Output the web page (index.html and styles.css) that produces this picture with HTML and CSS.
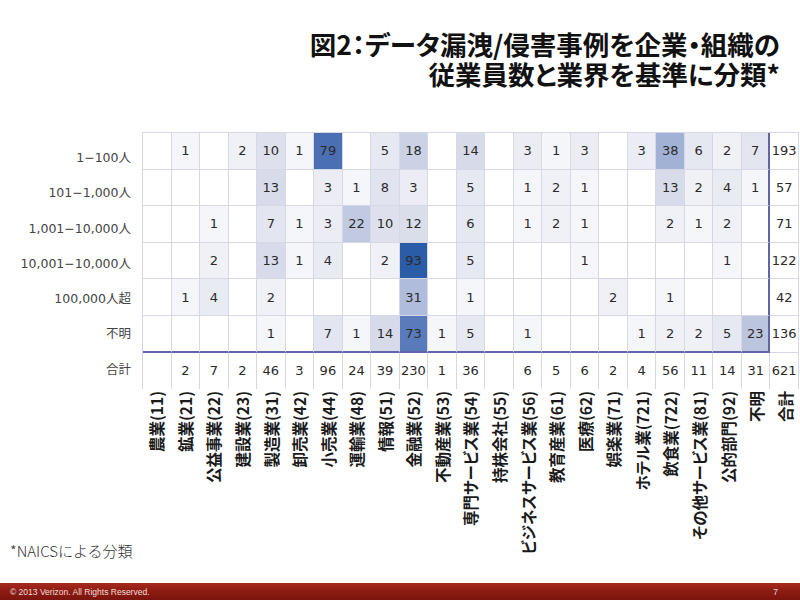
FILE: index.html
```html
<!DOCTYPE html>
<html lang="ja">
<head>
<meta charset="utf-8">
<title>図2</title>
<link rel="stylesheet" href="styles.css">
</head>
<body>
<div class="slide">
  <header class="title">
    <div>図2：データ漏洩/侵害事例を企業・組織の</div>
    <div>従業員数と業界を基準に分類*</div>
  </header>
  <section class="chart">
    <div class="rowlabels">
      <div>1−100人</div>
      <div>101−1,000人</div>
      <div>1,001−10,000人</div>
      <div>10,001−10,000人</div>
      <div>100,000人超</div>
      <div>不明</div>
      <div>合計</div>
    </div>
    <div class="plot">
      <div class="grid">
        <!-- row 1 -->
        <div class="c"></div><div class="c s1">1</div><div class="c"></div><div class="c s2">2</div><div class="c s10">10</div><div class="c s1">1</div><div class="c s79">79</div><div class="c"></div><div class="c s5">5</div><div class="c s18">18</div><div class="c"></div><div class="c s14">14</div><div class="c"></div><div class="c s3">3</div><div class="c s1">1</div><div class="c s3">3</div><div class="c"></div><div class="c s3">3</div><div class="c s38">38</div><div class="c s6">6</div><div class="c s2">2</div><div class="c s7 br">7</div><div class="c">193</div>
        <!-- row 2 -->
        <div class="c"></div><div class="c"></div><div class="c"></div><div class="c"></div><div class="c s13">13</div><div class="c"></div><div class="c s3">3</div><div class="c s1">1</div><div class="c s8">8</div><div class="c s3">3</div><div class="c"></div><div class="c s5">5</div><div class="c"></div><div class="c s1">1</div><div class="c s2">2</div><div class="c s1">1</div><div class="c"></div><div class="c"></div><div class="c s13">13</div><div class="c s2">2</div><div class="c s4">4</div><div class="c s1 br">1</div><div class="c">57</div>
        <!-- row 3 -->
        <div class="c"></div><div class="c"></div><div class="c s1">1</div><div class="c"></div><div class="c s7">7</div><div class="c s1">1</div><div class="c s3">3</div><div class="c s22">22</div><div class="c s10">10</div><div class="c s12">12</div><div class="c"></div><div class="c s6">6</div><div class="c"></div><div class="c s1">1</div><div class="c s2">2</div><div class="c s1">1</div><div class="c"></div><div class="c"></div><div class="c s2">2</div><div class="c s1">1</div><div class="c s2">2</div><div class="c br"></div><div class="c">71</div>
        <!-- row 4 -->
        <div class="c"></div><div class="c"></div><div class="c s2">2</div><div class="c"></div><div class="c s13">13</div><div class="c s1">1</div><div class="c s4">4</div><div class="c"></div><div class="c s2">2</div><div class="c s93">93</div><div class="c"></div><div class="c s5">5</div><div class="c"></div><div class="c"></div><div class="c"></div><div class="c s1">1</div><div class="c"></div><div class="c"></div><div class="c"></div><div class="c"></div><div class="c s1">1</div><div class="c br"></div><div class="c">122</div>
        <!-- row 5 -->
        <div class="c"></div><div class="c s1">1</div><div class="c s4">4</div><div class="c"></div><div class="c s2">2</div><div class="c"></div><div class="c"></div><div class="c"></div><div class="c"></div><div class="c s31">31</div><div class="c"></div><div class="c s1">1</div><div class="c"></div><div class="c"></div><div class="c"></div><div class="c"></div><div class="c s2">2</div><div class="c"></div><div class="c s1">1</div><div class="c"></div><div class="c"></div><div class="c br"></div><div class="c">42</div>
        <!-- row 6 -->
        <div class="c bb"></div><div class="c bb"></div><div class="c bb"></div><div class="c bb"></div><div class="c bb s1">1</div><div class="c bb"></div><div class="c bb s7">7</div><div class="c bb s1">1</div><div class="c bb s14">14</div><div class="c bb s73">73</div><div class="c bb s1">1</div><div class="c bb s5">5</div><div class="c bb"></div><div class="c bb s1">1</div><div class="c bb"></div><div class="c bb"></div><div class="c bb"></div><div class="c bb s1">1</div><div class="c bb s2">2</div><div class="c bb s2">2</div><div class="c bb s5">5</div><div class="c bb br s23">23</div><div class="c">136</div>
        <!-- totals -->
        <div class="c t"></div><div class="c t">2</div><div class="c t">7</div><div class="c t">2</div><div class="c t">46</div><div class="c t">3</div><div class="c t">96</div><div class="c t">24</div><div class="c t">39</div><div class="c t">230</div><div class="c t">1</div><div class="c t">36</div><div class="c t"></div><div class="c t">6</div><div class="c t">5</div><div class="c t">6</div><div class="c t">2</div><div class="c t">4</div><div class="c t">56</div><div class="c t">11</div><div class="c t">14</div><div class="c t">31</div><div class="c t">621</div>
      </div>
      <div class="collabels">
        <div><span>農業(11)</span></div>
        <div><span>鉱業(21)</span></div>
        <div><span>公益事業(22)</span></div>
        <div><span>建設業(23)</span></div>
        <div><span>製造業(31)</span></div>
        <div><span>卸売業(42)</span></div>
        <div><span>小売業(44)</span></div>
        <div><span>運輸業(48)</span></div>
        <div><span>情報(51)</span></div>
        <div><span>金融業(52)</span></div>
        <div><span>不動産業(53)</span></div>
        <div><span>専門サービス業(54)</span></div>
        <div><span>持株会社(55)</span></div>
        <div><span>ビジネスサービス業(56)</span></div>
        <div><span>教育産業(61)</span></div>
        <div><span>医療(62)</span></div>
        <div><span>娯楽業(71)</span></div>
        <div><span>ホテル業(721)</span></div>
        <div><span>飲食業(722)</span></div>
        <div><span>その他サービス業(81)</span></div>
        <div><span>公的部門(92)</span></div>
        <div><span>不明</span></div>
        <div><span>合計</span></div>
      </div>
    </div>
  </section>
  <p class="note">*NAICSによる分類</p>
  <footer class="footer">
    <span>© 2013 Verizon. All Rights Reserved.</span>
    <span>7</span>
  </footer>
</div>
</body>
</html>
```
FILE: styles.css
```css
html, body {
  margin: 0;
  padding: 0;
  background: #ffffff;
}

.slide {
  width: 800px;
  height: 600px;
  overflow: hidden;
  display: flex;
  flex-direction: column;
  font-family: "Noto Sans CJK JP", sans-serif;
  color: #222;
}

.title {
  height: 132px;
  box-sizing: border-box;
  padding: 29px 20px 0 0;
  text-align: right;
  font-size: 26.5px;
  line-height: 30px;
  font-weight: 700;
  color: #111;
  font-feature-settings: "palt";
}

.chart {
  display: flex;
}

.rowlabels {
  width: 142px;
  box-sizing: border-box;
  padding: 8px 11px 0 0;
  font-family: "DejaVu Sans", "Noto Sans CJK JP", sans-serif;
  font-size: 12.5px;
  color: #444;
  text-align: right;
}

.rowlabels div {
  height: 35.3px;
  line-height: 35.3px;
}

.plot {
  width: 657px;
}

.grid {
  display: grid;
  grid-template-columns: repeat(23, 1fr);
  grid-auto-rows: 36.6px;
  border-top: 1px solid #d6d8e6;
  border-left: 1px solid #d6d8e6;
  font-family: "DejaVu Sans", sans-serif;
  font-size: 13px;
  color: #2a2a2a;
}

.c {
  display: flex;
  align-items: center;
  justify-content: center;
  border-right: 1px solid #d6d8e6;
  border-bottom: 1px solid #d6d8e6;
  min-width: 0;
}

.c.t {
  border-bottom: none;
}

.c.bb {
  border-bottom: 2px solid #6265aa;
}

.c.br {
  border-right: 2px solid #6265aa;
}

.s1 { background: #f5f6fa; }
.s2 { background: #f0f1f6; }
.s3 { background: #ecedf4; }
.s4 { background: #e9ebf3; }
.s5 { background: #e7e9f2; }
.s6 { background: #e5e7f1; }
.s7 { background: #e3e5f0; }
.s8 { background: #e1e4ef; }
.s10 { background: #dee1ed; }
.s12 { background: #dadeeb; }
.s13 { background: #d8dcea; }
.s14 { background: #d6dae9; }
.s18 { background: #ccd2e5; }
.s22 { background: #c2cae1; }
.s23 { background: #bcc5de; }
.s31 { background: #b0bcdb; }
.s38 { background: #a2b2d6; }
.s73 { background: #5a7bbb; }
.s79 { background: #4a6fb2; }
.s93 { background: #2b5ca7; }

.collabels {
  display: grid;
  grid-template-columns: repeat(23, 1fr);
  height: 152px;
  box-sizing: border-box;
  padding-top: 2px;
  justify-items: center;
  align-items: start;
  font-size: 15.5px;
  font-weight: 700;
  color: #1a1a1a;
  font-feature-settings: "palt";
}

.collabels span {
  display: block;
  writing-mode: vertical-rl;
  text-orientation: sideways;
  transform: rotate(180deg);
  line-height: 18px;
  white-space: nowrap;
}

.note {
  margin: 0;
  padding-left: 10px;
  font-size: 15px;
  line-height: 20px;
  font-weight: 300;
  color: #333;
}

.footer {
  margin-top: auto;
  height: 17px;
  display: flex;
  justify-content: space-between;
  align-items: center;
  padding: 0 22px 0 10px;
  background: linear-gradient(to bottom, #a82a1e 0%, #8e1c13 45%, #7a140d 100%);
  color: #f4dcd8;
  font-family: "Liberation Sans", sans-serif;
  font-size: 8.5px;
}
```
